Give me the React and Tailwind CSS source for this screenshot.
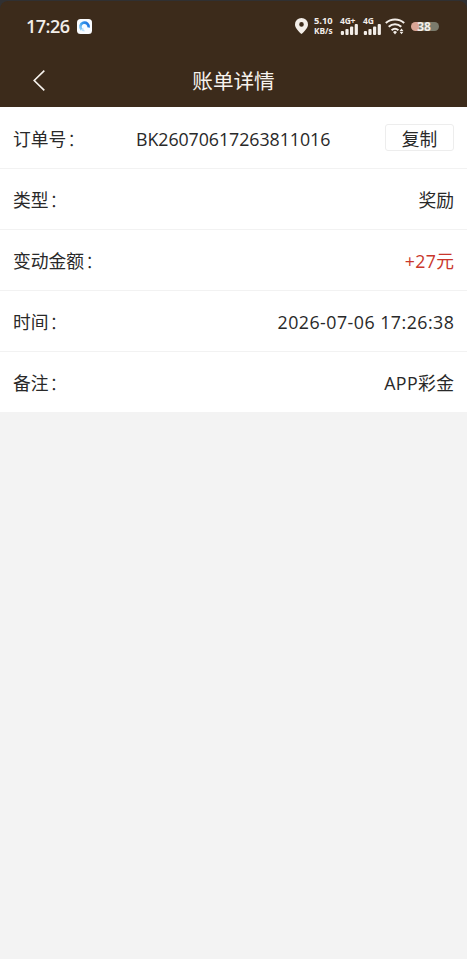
import React from 'react';

const rows = [
  { label: '类型', value: '奖励' },
  { label: '变动金额', value: '+27元', style: 'text-[#c9372c] tracking-[0.35px] -mr-[0.35px]' },
  { label: '时间', value: '2026-07-06 17:26:38', style: 'tracking-[0.48px] -mr-[0.4px]' },
  { label: '备注', value: 'APP彩金', style: 'tracking-[0.4px] -mr-[0.4px]' },
];

const Label = ({ children }) => (
  <span className="flex">
    {children}
    <span className="ml-px font-light">：</span>
  </span>
);

const Signal = ({ label }) => (
  <div className="w-[18px] h-[18px] flex flex-col justify-between">
    <span className="text-[8.5px] leading-[8px] font-bold tracking-[-0.2px]">{label}</span>
    <svg className="w-[18px] h-[11px] -mt-px" viewBox="0 0 18 11" fill="currentColor">
      <rect x="0.8" y="7" width="3.2" height="4" rx="1" />
      <rect x="5.4" y="5" width="3.2" height="6" rx="1" />
      <rect x="10" y="2.5" width="3.2" height="8.5" rx="1" />
      <rect x="14.7" y="0" width="3.2" height="11" rx="1" />
    </svg>
  </div>
);

const StatusBar = () => (
  <div className="h-[50px] pl-[26px] pr-7 flex items-center justify-between text-[#f3eee9]">
    <div className="flex items-center gap-[7px]">
      <span className="text-[18px] leading-none font-semibold tracking-[-0.5px]">17:26</span>
      <svg className="w-[15px] h-[15px]" viewBox="0 0 15 15" fill="none">
        <defs>
          <linearGradient id="swirl" x1="2" y1="10" x2="12" y2="4" gradientUnits="userSpaceOnUse">
            <stop offset="0" stopColor="#a5dafb" />
            <stop offset="0.45" stopColor="#3a9dee" />
            <stop offset="1" stopColor="#1b6fdd" />
          </linearGradient>
        </defs>
        <rect width="15" height="15" rx="3.5" fill="#fafcff" />
        <path d="M4.6 10.8A4.2 4.2 0 1 1 11.6 8.6" stroke="url(#swirl)" strokeWidth="2.7" />
        <path d="M4 10.2C4.8 12.2 6.4 12.6 8.2 12.2C6.6 11.2 6.2 9.8 6.4 8.6Z" fill="#b9e0fb" />
      </svg>
    </div>
    <div className="flex items-center">
      <svg className="w-[13px] h-4" viewBox="0 0 13 16">
        <path fillRule="evenodd" d="M6.5 0A6.5 6.5 0 0 0 0 6.4C0 10.3 4.1 13.6 6.5 16C8.9 13.6 13 10.3 13 6.4A6.5 6.5 0 0 0 6.5 0ZM6.5 4.1A2.3 2.3 0 1 1 6.5 8.7A2.3 2.3 0 1 1 6.5 4.1Z" fill="currentColor" />
      </svg>
      <div className="w-5 ml-1.5 flex flex-col text-[9.3px] leading-[10px] font-bold">
        <span className="whitespace-nowrap">5.10</span>
        <span className="whitespace-nowrap text-[8.3px]">KB/s</span>
      </div>
      <div className="ml-1.5 mr-px flex gap-[5px]">
        <Signal label="4G+" />
        <Signal label="4G" />
      </div>
      <svg className="w-5 h-[17px] ml-[3px]" viewBox="0 0 20 17" fill="none" stroke="currentColor" strokeWidth="2">
        <path d="M0.8 4.9C6 0.2 14 0.2 19.2 4.9" />
        <path d="M3.7 8.8C7.4 5.4 12.6 5.4 16.3 8.8" />
        <path d="M6.6 12.3C8.6 10.5 11.4 10.5 13.4 12.3" />
        <path d="M8 14L10 12.8L12 14L10 16.5Z" fill="currentColor" stroke="none" />
        <path d="M14.6 13.1L16.5 10.6L18.4 13.1ZM14.6 13.8H18.4L16.5 16.3Z" fill="currentColor" stroke="none" />
      </svg>
      <div className="w-7 h-[9px] ml-1.5 rounded-full bg-linear-to-r from-[#d9a595] from-30% to-[#7b7b6c] to-30% flex items-center justify-center">
        <span className="pt-px text-xs leading-none font-bold -ml-0.5">38</span>
      </div>
    </div>
  </div>
);

const App = () => {
  return (
    <div className="min-h-screen bg-[#f3f3f3] text-[#292929] font-['Open_Sans','Noto_Sans_CJK_SC',sans-serif]">
      <div className="bg-[#303032] pt-px">
        <header className="h-[106px] rounded-t-lg bg-[#3c2b1b]">
          <StatusBar />
          <div className="h-14 pt-0.5 px-[33px] grid grid-cols-[40px_1fr_40px] items-center text-[#f7f3ee]">
            <svg className="w-3 h-[21px]" viewBox="0 0 12 21" fill="none" stroke="currentColor" strokeWidth="1.6">
              <path d="M11.3 0.6L1.2 10.5L11.3 20.4" />
            </svg>
            <h1 className="pt-0.5 text-center text-[20.6px] leading-none">账单详情</h1>
          </div>
        </header>
      </div>

      <div className="bg-white text-[17.8px] leading-none">
        <div className="h-[62px] px-[13px] border-b border-[#f2f2f2] flex items-center">
          <div className="w-[123px] pt-1"><Label>订单号</Label></div>
          <span className="pt-1 tracking-[-0.05px]">BK26070617263811016</span>
          <button className="w-[69px] h-[27px] ml-auto pt-[5px] rounded-[3px] border border-[#ededed] bg-white flex items-center justify-center">复制</button>
        </div>
        {rows.map((row) => (
          <div key={row.label} className="h-[61px] pt-[3px] px-[13px] border-b border-[#f2f2f2] last:h-[60px] last:border-b-0 flex items-center justify-between">
            <Label>{row.label}</Label>
            <span className={row.style}>{row.value}</span>
          </div>
        ))}
      </div>
    </div>
  );
};

export default App;
